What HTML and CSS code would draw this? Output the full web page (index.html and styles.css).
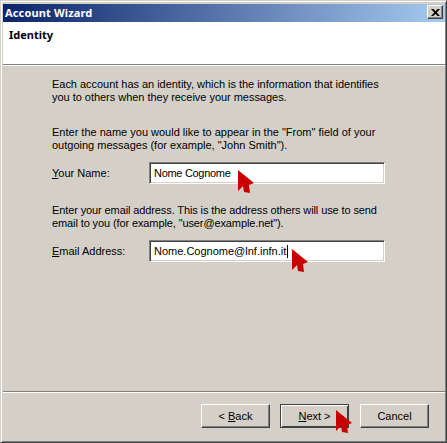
FILE: index.html
```html
<!DOCTYPE html>
<html lang="en">
<head>
    <meta charset="UTF-8">
    <meta name="viewport" content="width=device-width, initial-scale=1.0">
    <title>Account Wizard</title>
    <link rel="stylesheet" href="styles.css">
</head>
<body>
    <div class="window">
        <div class="titlebar">
            <span class="title">Account Wizard</span>
            <span class="close-btn">
                <svg width="9" height="7" viewBox="0 0 9 7"><path d="M0 0h2.500l2 2.200 2-2.200h2.500l-3.200 3.500 3.200 3.500h-2.500l-2-2.200-2 2.200h-2.500l3.200-3.500z" fill="#000"/></svg>
            </span>
        </div>
        <div class="header">Identity</div>
        <div class="content">
            <p class="intro">Each account has an identity, which is the information that identifies<br>you to others when they receive your messages.</p>
            <p class="desc">Enter the name you would like to appear in the "From" field of your<br>outgoing messages (for example, "John Smith").</p>
            <div class="field">
                <label class="field-label"><u>Y</u>our Name:</label>
                <div class="field-input field-input-name">Nome Cognome</div>
                <svg class="pointer pointer-name" width="17" height="24" viewBox="0 0 17 24"><path d="M0 0L16 13L11 15L12 23L6 22L5 16L0 21z" fill="#c80000"/></svg>
            </div>
            <p class="desc desc-email">Enter your email address. This is the address others will use to send<br>email to you (for example, "user@example.net").</p>
            <div class="field">
                <label class="field-label"><u>E</u>mail Address:</label>
                <div class="field-input">Nome.Cognome@lnf.infn.it<span class="caret"></span></div>
                <svg class="pointer pointer-email" width="17" height="24" viewBox="0 0 17 24"><path d="M0 0L16 13L11 15L12 23L6 22L5 16L0 21z" fill="#c80000"/></svg>
            </div>
        </div>
        <div class="footer">
            <button class="btn">&lt; <u>B</u>ack</button>
            <div class="btn-wrap">
                <button class="btn btn-default"><u>N</u>ext &gt;</button>
                <svg class="pointer pointer-next" width="17" height="24" viewBox="0 0 17 24"><path d="M0 0L16 13L11 15L12 23L6 22L5 16L0 21z" fill="#c80000"/></svg>
            </div>
            <button class="btn btn-cancel">Cancel</button>
        </div>
    </div>
</body>
</html>
```

FILE: styles.css
```css
html, body {
    margin: 0;
    padding: 0;
}

body {
    width: 447px;
    height: 443px;
    overflow: hidden;
    font-family: "Liberation Sans", Arial, sans-serif;
    font-size: 11px;
    color: #000;
    background: #d4d0c8;
}

.window {
    box-sizing: border-box;
    width: 447px;
    height: 443px;
    display: flex;
    flex-direction: column;
    padding: 3px 1px 1px 2px;
    background: #d4d0c8;
    border: 1px solid;
    border-color: #d4d0c8 #404040 #404040 #d4d0c8;
    box-shadow: inset 1px 1px 0 #fff, inset -1px -1px 0 #808080;
}

.titlebar {
    box-sizing: border-box;
    height: 18px;
    flex: none;
    display: flex;
    align-items: center;
    justify-content: space-between;
    padding: 0 2px 2px;
    color: #fff;
    font-family: "Noto Sans", sans-serif;
    font-weight: bold;
    letter-spacing: 0.15px;
    background: linear-gradient(90deg, #0a246a, #a6caf0);
}

.close-btn {
    box-sizing: border-box;
    width: 16px;
    height: 14px;
    display: flex;
    align-items: center;
    justify-content: center;
    background: #d4d0c8;
    border: 1px solid;
    border-color: #fff #404040 #404040 #fff;
    box-shadow: inset -1px -1px 0 #808080;
}

.header {
    box-sizing: border-box;
    flex: none;
    height: 43px;
    padding: 5px 0 0 6px;
    font-family: "Noto Sans", sans-serif;
    font-weight: bold;
    background: #fff;
    border-bottom: 1px solid #808080;
}

.content {
    flex: 1;
    padding: 12px 0 0 49px;
    border-top: 1px solid #fff;
}

.intro, .desc {
    margin: 0;
    line-height: 13px;
}

.intro {
    margin-bottom: 22px;
    letter-spacing: -0.03px;
}

.desc {
    margin-bottom: 10px;
}

.desc-email {
    margin-top: 20px;
    letter-spacing: -0.11px;
}

.field {
    position: relative;
    display: flex;
    align-items: center;
    height: 22px;
}

.field-label {
    width: 97px;
}

.field-input {
    box-sizing: border-box;
    width: 236px;
    height: 22px;
    padding: 4px 0 0 4px;
    line-height: 13px;
    background: #fff;
    border: 1px solid;
    border-color: #808080 #fff #fff #808080;
    box-shadow: inset 1px 1px 0 #404040, inset -1px -1px 0 #d4d0c8;
}

.field-input-name {
    letter-spacing: -0.3px;
}

.caret {
    display: inline-block;
    width: 1px;
    height: 13px;
    margin-left: 1px;
    vertical-align: top;
    background: #000;
}

.pointer {
    position: absolute;
    overflow: visible;
}

.pointer-name {
    left: 186px;
    top: 8px;
}

.pointer-email {
    left: 240px;
    top: 9px;
}

.pointer-next {
    left: 56px;
    top: 6px;
}

.footer {
    flex: none;
    height: 50px;
    box-sizing: border-box;
    display: flex;
    gap: 10px;
    justify-content: flex-end;
    align-items: flex-start;
    padding: 12px 16px 0 0;
    border-top: 1px solid #808080;
    box-shadow: inset 0 1px 0 #fff;
}

.btn-wrap {
    position: relative;
    display: flex;
}

.btn {
    box-sizing: border-box;
    width: 69px;
    height: 24px;
    padding: 0;
    font: inherit;
    color: #000;
    background: #d4d0c8;
    border: 1px solid;
    border-color: #fff #404040 #404040 #fff;
    box-shadow: inset -1px -1px 0 #808080;
}

.btn-default {
    border-color: #404040;
    box-shadow: inset 1px 1px 0 #fff, inset -1px -1px 0 #404040;
}

.btn-cancel {
    margin-left: 1px;
}
```
